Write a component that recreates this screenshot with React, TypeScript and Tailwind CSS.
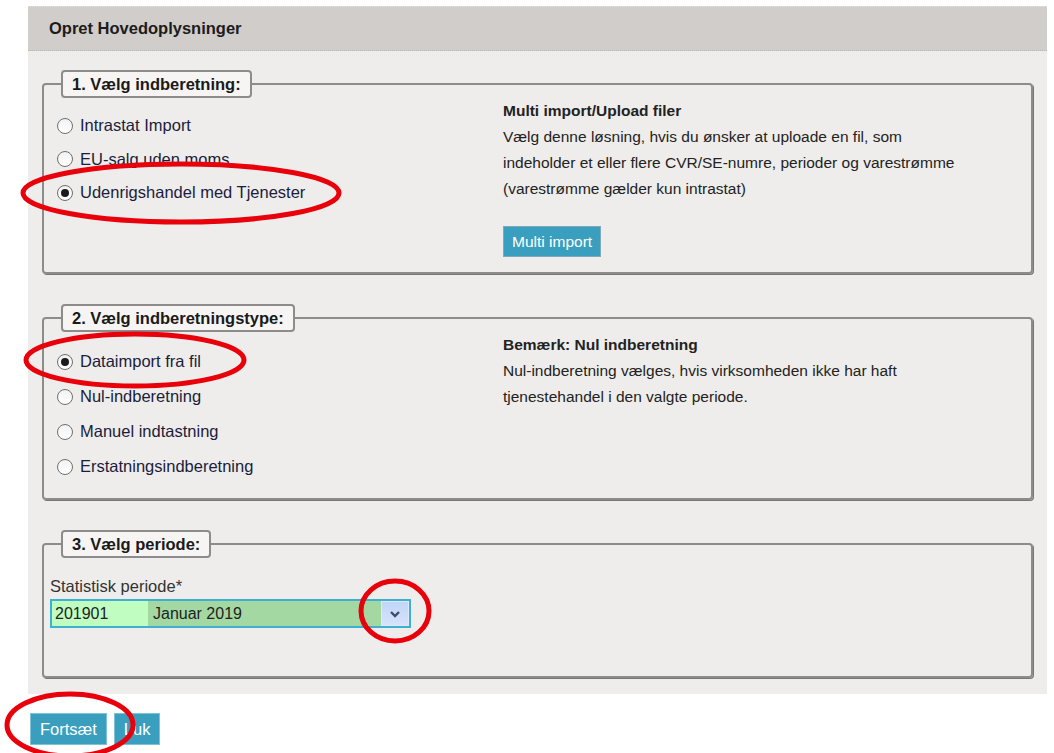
const typeOptions = [
  {label: 'Intrastat Import', checked: false},
  {label: 'EU-salg uden moms', checked: false},
  {label: 'Udenrigshandel med Tjenester', checked: true},
];

const kindOptions = [
  {label: 'Dataimport fra fil', checked: true},
  {label: 'Nul-indberetning', checked: false},
  {label: 'Manuel indtastning', checked: false},
  {label: 'Erstatningsindberetning', checked: false},
];

const Radio = ({checked}: {checked: boolean}) => (
  <span className="flex h-[16px] w-[16px] shrink-0 items-center justify-center rounded-full border border-[#6f6f6f] bg-gradient-to-b from-[#f2f2f2] to-white">
    {checked && <span className="h-[8px] w-[8px] rounded-full bg-[#1b1b1b]" />}
  </span>
);

const Section = ({title, children}: {title: string; children: React.ReactNode}) => (
  <fieldset className="rounded-[4px] border-2 border-[#8c8c8c] pl-[6px] pr-[10px] shadow-[1px_1px_0_#777]">
    <legend className="ml-[11px] rounded-[4px] border-2 border-[#8c8c8c] bg-[#f6f5f4] px-[9px] text-[16.5px] leading-[24px] font-bold text-[#1a1a1a]">
      {title}
    </legend>
    {children}
  </fieldset>
);

const Button = ({label}: {label: string}) => (
  <button className="h-[32px] border border-[#7cc3d8] bg-[#3a9fbe] px-[9px] text-[16.5px] text-white">{label}</button>
);

const App = () => {
  return (
    <div className="relative h-[753px] w-[1054px] bg-white font-['Liberation_Sans'] text-[15.5px] text-[#222]">
      <div className="ml-[28px] w-[1019px] pt-[6px]">
        <div className="flex h-[45px] items-center border-t border-[#e2dfdd] border-b border-b-[#b9b5b2] border-dotted bg-[#d1cdca] pl-[21px] text-[16.5px] font-bold text-[#1c1c1c]">
          Opret Hovedoplysninger
        </div>
        <div className="flex flex-col gap-[30px] bg-[#eeedeb] px-[14px] pb-[16px] pt-[19px]">
          <Section title="1. Vælg indberetning:">
            <div className="grid grid-cols-[453px_1fr] pb-[15px]">
              <div className="flex flex-col pt-[11px]">
                {typeOptions.map(({label, checked}) => (
                  <div key={label} className="flex h-[33.5px] items-center gap-[7px] pl-[7px] text-[16.5px] text-[#1c1c3c]">
                    <Radio checked={checked} />
                    <span>{label}</span>
                  </div>
                ))}
              </div>
              <div className="leading-[26px]">
                <div className="font-bold">Multi import/Upload filer</div>
                <div>Vælg denne løsning, hvis du ønsker at uploade en fil, som</div>
                <div>indeholder et eller flere CVR/SE-numre, perioder og varestrømme</div>
                <div>(varestrømme gælder kun intrastat)</div>
                <button className="mt-[24px] h-[31px] border border-[#7fa9b8] bg-[#3a9fbe] px-[8px] text-[15.5px] text-white">
                  Multi import
                </button>
              </div>
            </div>
          </Section>

          <Section title="2. Vælg indberetningstype:">
            <div className="grid grid-cols-[453px_1fr] pb-[14px]">
              <div className="flex flex-col pt-[12px]">
                {kindOptions.map(({label, checked}) => (
                  <div key={label} className="flex h-[35px] items-center gap-[7px] pl-[7px] text-[16.5px] text-[#1c1c3c]">
                    <Radio checked={checked} />
                    <span>{label}</span>
                  </div>
                ))}
              </div>
              <div className="leading-[26px]">
                <div className="font-bold">Bemærk: Nul indberetning</div>
                <div>Nul-indberetning vælges, hvis virksomheden ikke har haft</div>
                <div>tjenestehandel i den valgte periode.</div>
              </div>
            </div>
          </Section>

          <Section title="3. Vælg periode:">
            <div className="pb-[48px] pt-[18px]">
              <div className="text-[16.5px] leading-[20px] text-[#333]">Statistisk periode*</div>
              <div className="mt-[3px] flex h-[29px] w-[361px] border-2 border-[#3fb0cf] text-[16px] text-[#222]">
                <div className="flex w-[96px] items-center bg-[#c0fdc0] pl-[3px]">201901</div>
                <div className="flex flex-1 items-center bg-[#a3d8a3] pl-[5px]">Januar 2019</div>
                <div className="flex w-[28px] items-center justify-center border border-[#dfe9fb] bg-gradient-to-b from-[#c2d6f8] to-[#d5e3fb]">
                  <svg width="12" height="8" viewBox="0 0 12 8">
                    <path d="M2 2 L6 6 L10 2" fill="none" stroke="#3d4c66" strokeWidth="2.4" />
                  </svg>
                </div>
              </div>
            </div>
          </Section>
        </div>
        <div className="flex gap-[7px] pl-[2px] pt-[19px]">
          <Button label="Fortsæt" />
          <Button label="Luk" />
        </div>
      </div>

      <svg className="pointer-events-none absolute left-0 top-0" width="1054" height="753">
        <g fill="none" stroke="#e8000b" strokeWidth="5">
          <ellipse cx="181" cy="193" rx="158" ry="29" />
          <ellipse cx="135" cy="360" rx="109" ry="26" />
          <ellipse cx="395" cy="611" rx="34" ry="30" />
          <ellipse cx="70" cy="725" rx="63" ry="31" />
        </g>
      </svg>
    </div>
  );
};

export default App;
